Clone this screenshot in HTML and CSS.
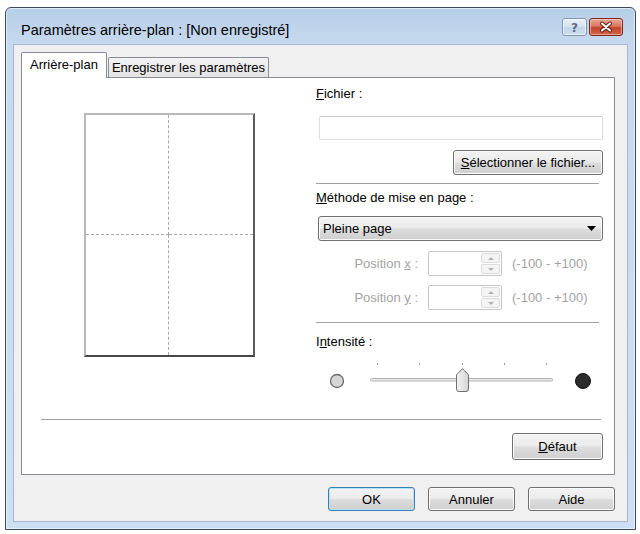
FILE: index.html
```html
<!DOCTYPE html>
<html lang="fr">
<head>
<meta charset="utf-8">
<title>Paramètres arrière-plan</title>
<link rel="stylesheet" href="styles.css">
</head>
<body>
<div class="window">
  <div class="titlebar">
    <span class="title">Paramètres arrière-plan : [Non enregistré]</span>
    <div class="caption-btns">
      <div class="cbtn help">
        <svg width="25" height="18" viewBox="0 0 25 18"><text x="12.5" y="13.5" text-anchor="middle" class="qmark">?</text></svg>
      </div>
      <div class="cbtn close">
        <svg width="34" height="18" viewBox="0 0 34 18">
          <path d="M13 5.5 L21 12.5 M21 5.5 L13 12.5" stroke="#5a1c10" stroke-width="4" stroke-linecap="round"/>
          <path d="M13 5.5 L21 12.5 M21 5.5 L13 12.5" stroke="#ffffff" stroke-width="2.1" stroke-linecap="round"/>
        </svg>
      </div>
    </div>
  </div>
  <div class="client">
    <div class="tabs">
      <div class="tab active">Arrière-plan</div>
      <div class="tab">Enregistrer les paramètres</div>
    </div>
    <div class="panel">
      <div class="panel-main">
        <div class="preview">
          <div class="paper">
            <div class="q q1"></div><div class="q q2"></div>
            <div class="q q3"></div><div class="q q4"></div>
          </div>
        </div>
        <div class="settings">
          <div class="label l-fichier"><u>F</u>ichier :</div>
          <div class="textbox"></div>
          <div class="btn-row"><div class="btn btn-select"><u>S</u>électionner le fichier...</div></div>
          <div class="sep sep-a"></div>
          <div class="label l-methode"><u>M</u>éthode de mise en page :</div>
          <div class="combo"><span>Pleine page</span>
            <svg width="9" height="5" viewBox="0 0 9 5"><path d="M0 0 H9 L4.5 5 Z" fill="#000"/></svg>
          </div>
          <div class="spin-row first">
            <div class="spin-label">Position <u>x</u> :</div>
            <div class="spin"><div class="spin-text"></div><div class="spin-btns"><div class="sb up"></div><div class="sb down"></div></div></div>
            <div class="range">(-100 - +100)</div>
          </div>
          <div class="spin-row second">
            <div class="spin-label">Position <u>y</u> :</div>
            <div class="spin"><div class="spin-text"></div><div class="spin-btns"><div class="sb up"></div><div class="sb down"></div></div></div>
            <div class="range">(-100 - +100)</div>
          </div>
          <div class="sep sep-b"></div>
          <div class="label l-intens">I<u>n</u>tensité :</div>
          <svg class="slider" width="287" height="40" viewBox="0 0 287 40">
            <defs>
              <linearGradient id="thumbg" x1="0" y1="0" x2="1" y2="0">
                <stop offset="0" stop-color="#f4f4f4"/>
                <stop offset="1" stop-color="#d4d4d4"/>
              </linearGradient>
            </defs>
            <circle cx="21" cy="26" r="6.5" fill="#d6d6d6" stroke="#6a6a6a" stroke-width="1.3"/>
            <circle cx="267" cy="26" r="7.5" fill="#2b2b2b" stroke="#111" stroke-width="1"/>
            <rect x="61" y="8" width="1" height="2" fill="#9a9a9a"/>
            <rect x="103" y="8" width="1" height="2" fill="#9a9a9a"/>
            <rect x="146" y="8" width="1" height="2" fill="#9a9a9a"/>
            <rect x="188" y="8" width="1" height="2" fill="#9a9a9a"/>
            <rect x="230" y="8" width="1" height="2" fill="#9a9a9a"/>
            <rect x="54.5" y="23.5" width="182" height="2.5" rx="1" fill="#e9ebeb" stroke="#b3b3b3" stroke-width="1"/>
            <path d="M140.5 20 L146.5 13.5 L152.5 20 V34 Q152.5 36.5 150 36.5 H143 Q140.5 36.5 140.5 34 Z" fill="url(#thumbg)" stroke="#707070" stroke-width="1"/>
          </svg>
        </div>
      </div>
      <div class="sep sep-wide"></div>
      <div class="panel-foot"><div class="btn btn-defaut"><u>D</u>éfaut</div></div>
    </div>
    <div class="dialog-btns">
      <div class="btn dbtn default">OK</div>
      <div class="btn dbtn">Annuler</div>
      <div class="btn dbtn">Aide</div>
    </div>
  </div>
</div>
</body>
</html>
```

FILE: styles.css
```css
* { box-sizing: border-box; }
html, body { margin: 0; }
body {
  background: #ffffff;
  padding: 7px 4px 4px 5px;
  width: 640px;
  height: 534px;
  font-family: "Liberation Sans", Arial, sans-serif;
  font-size: 13px;
  color: #000;
}
u { text-decoration: underline; text-underline-offset: 1px; }

.window {
  width: 631px;
  height: 523px;
  border: 1px solid #3b4a5a;
  border-radius: 6px 6px 0 0;
  background: linear-gradient(#b7cee8 0, #c6d9ee 36px, #cddff2 100%);
  box-shadow: inset 0 0 0 1px rgba(255,255,255,0.55);
  padding: 0 7px 7px 7px;
  display: flex;
  flex-direction: column;
}

.titlebar {
  height: 36px;
  display: flex;
  justify-content: space-between;
  align-items: flex-start;
  padding: 0 5px 0 8px;
}
.title {
  font-size: 14.5px;
  line-height: 16px;
  margin-top: 14px;
  color: #000;
}
.caption-btns {
  display: flex;
  gap: 2px;
  margin-top: 10px;
}
.cbtn {
  height: 18px;
  border-radius: 3px;
  display: flex;
}
.cbtn.help {
  width: 25px;
  border: 1px solid #8196b2;
  background: linear-gradient(#e8f0f9 0%, #d6e3f1 45%, #c2d4ea 55%, #cfdff1 100%);
  box-shadow: inset 0 0 0 1px rgba(255,255,255,0.6);
}
.cbtn.help svg, .cbtn.close svg { margin: -1px; }
.qmark {
  font-family: "DejaVu Sans", sans-serif;
  font-size: 12px;
  font-weight: bold;
  fill: #5a6b82;
}
.cbtn.close {
  width: 34px;
  border: 1px solid #7a2b1d;
  background: linear-gradient(#eaa999 0%, #d8775f 45%, #c2442a 55%, #d2674c 100%);
  box-shadow: inset 0 0 0 1px rgba(255,220,210,0.5);
}

.client {
  flex: 1;
  background: #f0f0f0;
  border: 1px solid #a5b8cf;
  padding: 7px 12px 10px 7px;
  display: flex;
  flex-direction: column;
}

.tabs {
  height: 25px;
  display: flex;
  align-items: flex-end;
}
.tab {
  height: 20px;
  border: 1px solid #898c95;
  border-bottom: none;
  border-radius: 2px 2px 0 0;
  background: linear-gradient(#f3f3f3, #e3e3e3);
  line-height: 19px;
  width: 161px;
  text-align: center;
  white-space: nowrap;
  margin-left: 1px;
}
.tab.active {
  width: 86px;
  height: 26px;
  margin-left: 0;
  margin-bottom: -1px;
  background: #ffffff;
  position: relative;
  z-index: 1;
  line-height: 24px;
}

.panel {
  height: 398px;
  border: 1px solid #898c95;
  background: #ffffff;
  padding: 0 11px 14px 19px;
  display: flex;
  flex-direction: column;
}
.panel-main {
  display: flex;
  height: 317px;
}
.preview {
  margin-left: 43px;
  width: 171px;
}
.paper {
  margin-top: 35px;
  width: 171px;
  height: 244px;
  border-left: 2px solid #b8b8b8;
  border-top: 2px solid #b8b8b8;
  border-right: 2px solid #5a5a5a;
  border-bottom: 2px solid #474747;
  display: grid;
  grid-template-columns: 83px 1fr;
  grid-template-rows: 120px 1fr;
}
.q1 { border-right: 1px dashed #a8a8a8; border-bottom: 1px dashed #a8a8a8; }
.q2 { border-bottom: 1px dashed #a8a8a8; }
.q3 { border-right: 1px dashed #a8a8a8; }

.settings {
  margin-left: 61px;
  width: 287px;
  display: flex;
  flex-direction: column;
}
.label {
  height: 14px;
  line-height: 14px;
  white-space: nowrap;
}
.l-fichier { margin-top: 9px; }
.textbox {
  margin-top: 15px;
  margin-left: 3px;
  height: 24px;
  border: 1px solid #dadde3;
  border-top-color: #c4c7cd;
  border-radius: 2px;
  background: #fff;
}
.btn-row {
  margin-top: 10px;
  display: flex;
  justify-content: flex-end;
}
.btn {
  border: 1px solid #707070;
  border-radius: 3px;
  background: linear-gradient(#f3f3f3 0%, #ebebeb 48%, #dddddd 52%, #cfcfcf 100%);
  box-shadow: inset 0 0 0 1px #fbfbfb;
  display: flex;
  align-items: center;
  justify-content: center;
  white-space: nowrap;
}
.btn-select {
  width: 150px;
  height: 25px;
}
.sep {
  height: 2px;
  border-top: 1px solid #a0a0a0;
  border-bottom: 1px solid #ffffff;
}
.sep-a { margin-top: 8px; width: 283px; }
.l-methode { margin-top: 6px; }
.combo {
  margin-top: 11px;
  margin-left: 2px;
  height: 25px;
  border: 1px solid #707070;
  border-radius: 3px;
  background: linear-gradient(#f3f3f3 0%, #ebebeb 48%, #dddddd 52%, #cfcfcf 100%);
  box-shadow: inset 0 0 0 1px #fbfbfb;
  display: flex;
  align-items: center;
  justify-content: space-between;
  padding: 0 6px 0 4px;
}
.spin-row {
  height: 25px;
  display: flex;
  align-items: center;
  color: #a3a3a3;
}
.spin-row.first { margin-top: 10px; }
.spin-row.second { margin-top: 9px; }
.spin-label {
  width: 102px;
  text-align: right;
  white-space: nowrap;
}
.spin {
  margin-left: 10px;
  width: 74px;
  height: 25px;
  border: 1px solid #c6c6c6;
  border-radius: 2px;
  background: #fff;
  display: flex;
}
.spin-text { flex: 1; }
.spin-btns {
  width: 21px;
  display: flex;
  flex-direction: column;
  padding: 1px;
  gap: 1px;
}
.sb {
  flex: 1;
  border: 1px solid #dcdcdc;
  border-radius: 2px;
  background: #f4f4f4;
  display: flex;
  align-items: center;
  justify-content: center;
}
.sb::after {
  content: "";
  width: 0;
  height: 0;
  border-left: 3px solid transparent;
  border-right: 3px solid transparent;
}
.sb.up::after { border-bottom: 3px solid #b0b0b0; }
.sb.down::after { border-top: 3px solid #b0b0b0; }
.range {
  margin-left: 10px;
  white-space: nowrap;
}
.sep-b { margin-top: 12px; width: 283px; }
.l-intens { margin-top: 11px; }
.slider { margin-top: 6px; display: block; }

.sep-wide { margin-top: 24px; width: 560px; }
.panel-foot {
  margin-top: 12px;
  display: flex;
  justify-content: flex-end;
}
.btn-defaut {
  width: 91px;
  height: 27px;
}

.dialog-btns {
  margin-top: 12px;
  display: flex;
  justify-content: flex-end;
  gap: 13px;
}
.dbtn {
  width: 87px;
  height: 24px;
}
.dbtn.default {
  border-color: #3c7fb1;
  box-shadow: inset 0 0 0 1px #b5e1f7;
}
```
